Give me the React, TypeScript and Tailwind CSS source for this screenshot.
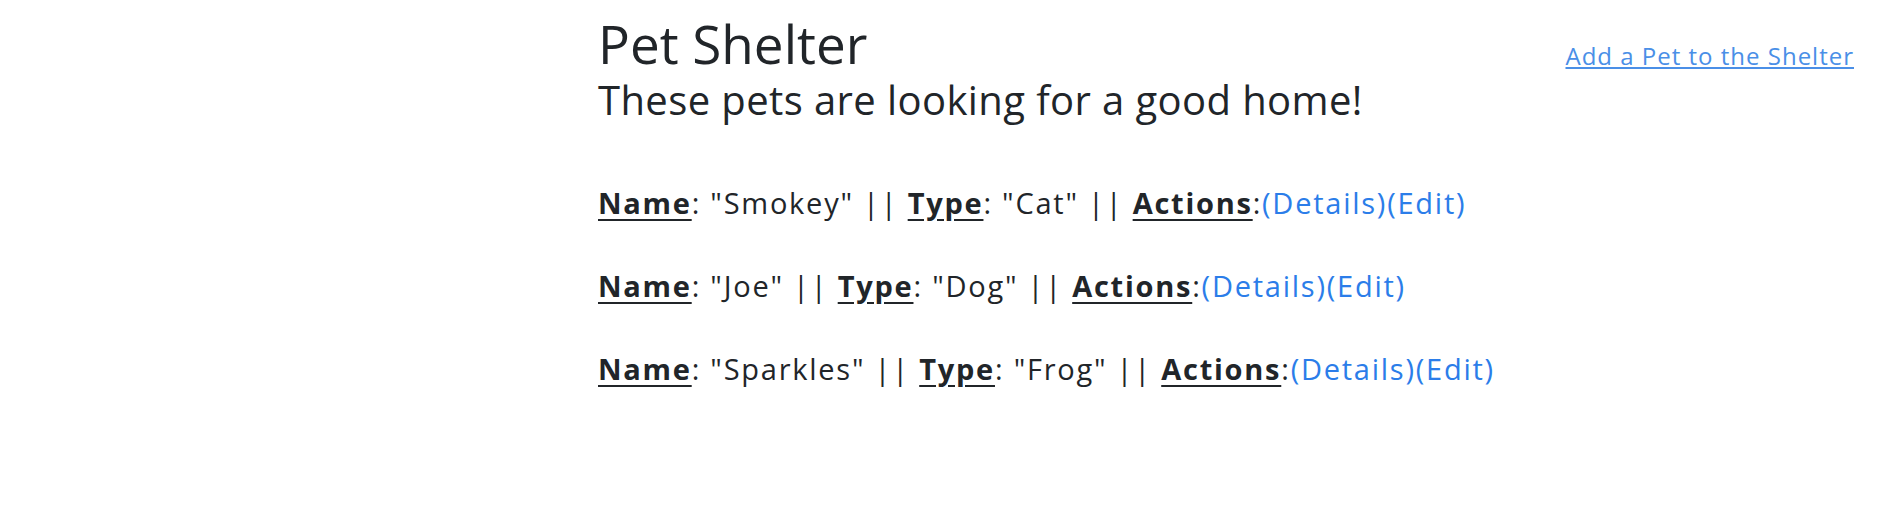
const pets = [
  { name: "Smokey", type: "Cat" },
  { name: "Joe", type: "Dog" },
  { name: "Sparkles", type: "Frog" },
];

function PetRow({ name, type }: { name: string; type: string }) {
  return (
    <p className="text-[29px] leading-[42px] tracking-[1.75px] text-[#212529]">
      <b className="font-bold underline underline-offset-[5px]">Name</b>: "{name}" ||{" "}
      <b className="font-bold underline underline-offset-[5px]">Type</b>: "{type}" ||{" "}
      <b className="font-bold underline underline-offset-[5px]">Actions</b>:
      <a href="#" className="text-[#2b7de9]">(Details)</a>
      <a href="#" className="text-[#2b7de9]">(Edit)</a>
    </p>
  );
}

export default function App() {
  return (
    <div className="min-h-[518px] bg-white font-['Open_Sans',sans-serif] text-[#212529]">
      <div className="ml-[598px] mr-[38px] flex items-start justify-between pt-[12px]">
        <div>
          <h1 className="text-[53px] leading-[64px] font-normal">Pet Shelter</h1>
          <h2 className="text-[40px] leading-[48px] font-normal tracking-[0.4px]">
            These pets are looking for a good home!
          </h2>
          <div className="mt-[58px] flex flex-col gap-[41px]">
            {pets.map((p) => (
              <PetRow key={p.name} name={p.name} type={p.type} />
            ))}
          </div>
        </div>
        <a
          href="#"
          className="mt-[26px] text-[24px] leading-[36px] tracking-[1px] text-[#4a8fe7] underline"
        >
          Add a Pet to the Shelter
        </a>
      </div>
    </div>
  );
}
